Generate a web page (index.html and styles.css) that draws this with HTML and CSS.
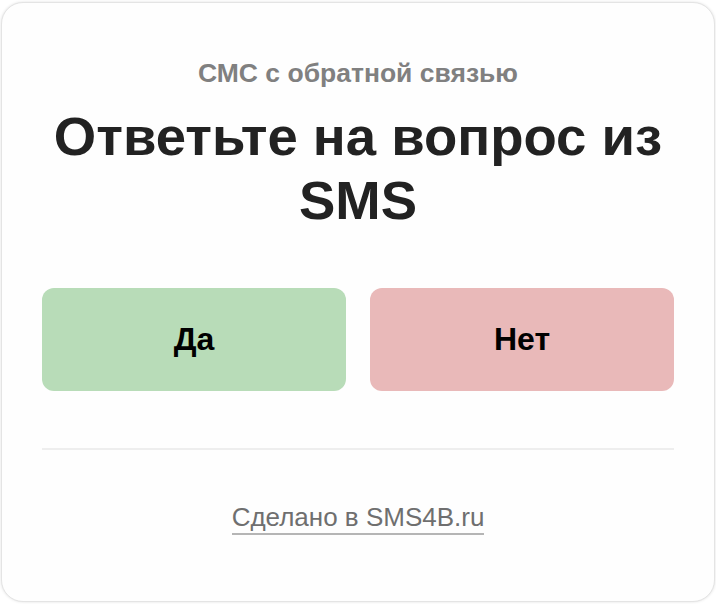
FILE: index.html
```html
<!DOCTYPE html>
<html lang="ru">
<head>
<meta charset="utf-8">
<link rel="stylesheet" href="styles.css">
</head>
<body>
<main class="card">
  <div class="subtitle">СМС с обратной связью</div>
  <h1 class="title">Ответьте на вопрос из SMS</h1>
  <div class="buttons">
    <button class="btn btn-yes">Да</button>
    <button class="btn btn-no">Нет</button>
  </div>
  <hr class="divider">
  <div class="footer"><a class="link" href="#">Сделано в SMS4B.ru</a></div>
</main>
</body>
</html>
```
FILE: styles.css
```css
html, body {
  margin: 0;
  padding: 0;
  background: #ffffff;
}
body {
  font-family: "Liberation Sans", Arial, sans-serif;
  padding: 2px 1px 2px 1px;
  box-sizing: border-box;
  height: 604px;
}
.card {
  box-sizing: border-box;
  height: 600px;
  border: 1px solid #e4e4e4;
  border-radius: 22px;
  box-shadow: 0 0 3px rgba(0, 0, 0, 0.12);
  background: #fefefe;
  padding: 56px 40px 0;
  display: flex;
  flex-direction: column;
  align-items: stretch;
}
.subtitle {
  text-align: center;
  font-size: 26.5px;
  font-weight: bold;
  color: #808080;
  line-height: 28px;
}
.title {
  margin: 18px 0 0;
  text-align: center;
  font-size: 54.5px;
  font-weight: bold;
  line-height: 64px;
  color: #222222;
}
.buttons {
  margin-top: 55px;
  display: flex;
  gap: 24px;
}
.btn {
  flex: 1;
  height: 103px;
  border: none;
  border-radius: 12px;
  font-family: "Liberation Sans", Arial, sans-serif;
  font-size: 32px;
  font-weight: bold;
  color: #000000;
  cursor: pointer;
}
.btn-yes { background: #b8dcb8; }
.btn-no { background: #e9b9b9; }
.divider {
  margin: 57px 0 0;
  border: none;
  border-top: 2px solid #eeeeee;
}
.footer {
  margin-top: 52px;
  text-align: center;
}
.link {
  font-size: 26px;
  color: #6f6f6f;
  text-decoration: none;
  border-bottom: 2px solid #b5b5b5;
  padding-bottom: 1px;
}
```
